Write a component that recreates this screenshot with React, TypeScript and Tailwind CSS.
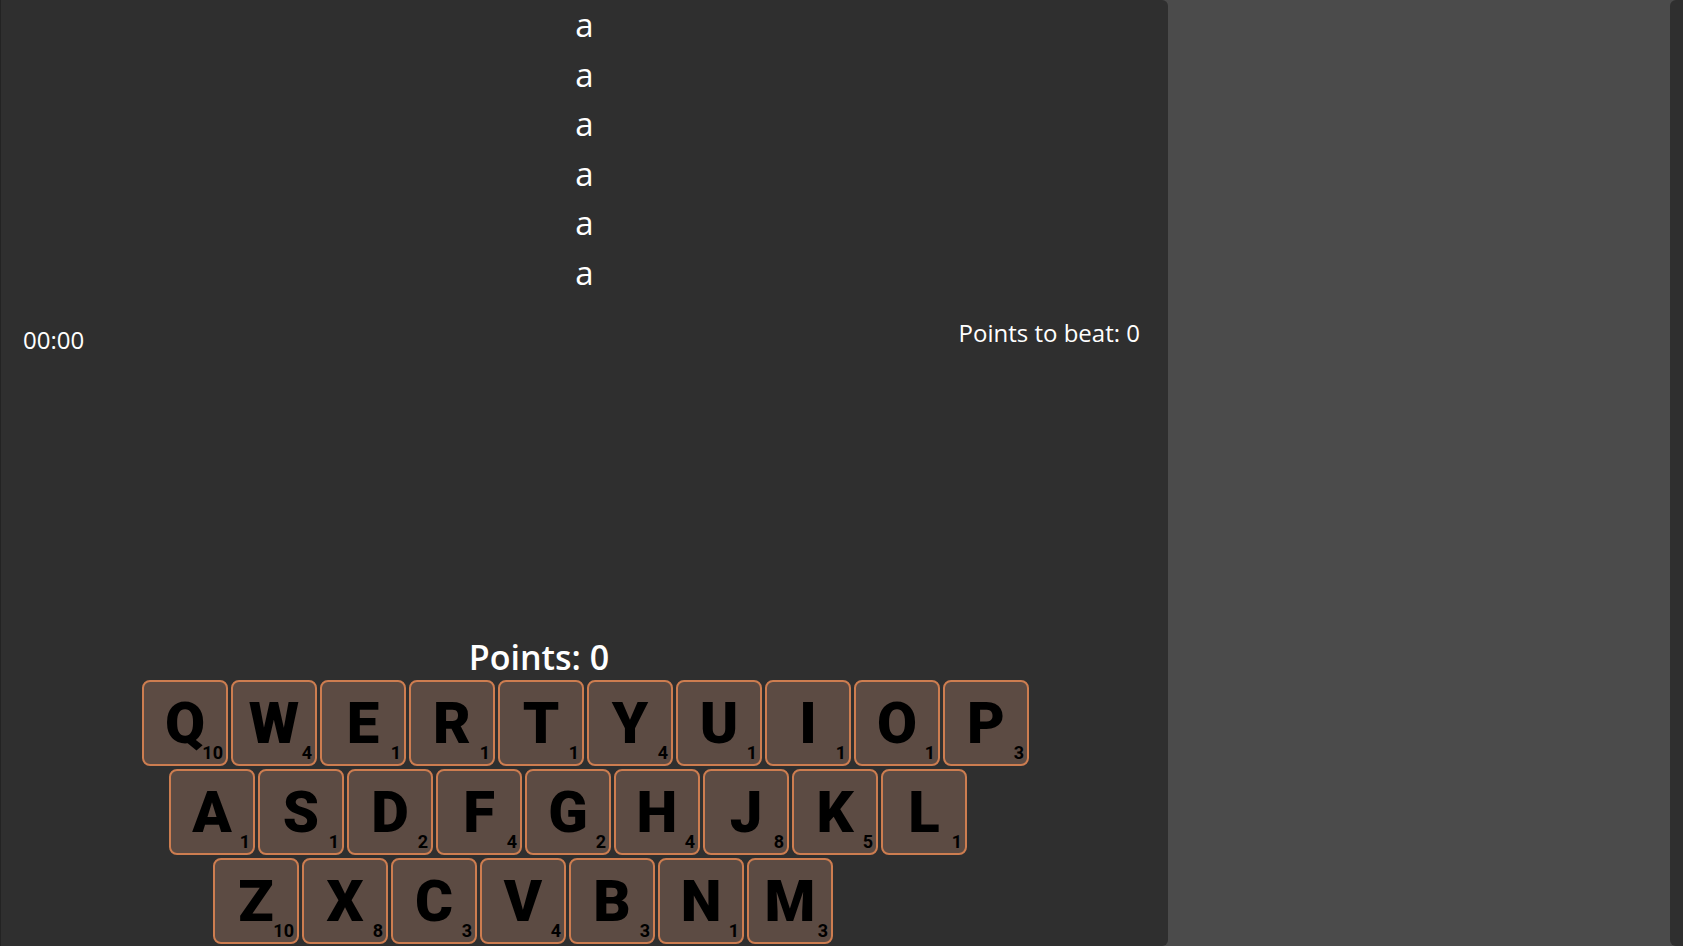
const rows: [string, number][][] = [
  [["Q", 10], ["W", 4], ["E", 1], ["R", 1], ["T", 1], ["Y", 4], ["U", 1], ["I", 1], ["O", 1], ["P", 3]],
  [["A", 1], ["S", 1], ["D", 2], ["F", 4], ["G", 2], ["H", 4], ["J", 8], ["K", 5], ["L", 1]],
  [["Z", 10], ["X", 8], ["C", 3], ["V", 4], ["B", 3], ["N", 1], ["M", 3]],
];

const rowOffsets = ["ml-[141px]", "ml-[168px]", "ml-[212px]"];

function Tile({ letter, value }: { letter: string; value: number }) {
  return (
    <div className="relative flex h-[86px] w-[86px] shrink-0 items-center justify-center rounded-[8px] border-2 border-[#cd7d50] bg-[#5c4b43]">
      <span className="text-[58px] font-black leading-none text-black" style={{ fontFamily: "Roboto, sans-serif" }}>
        {letter}
      </span>
      <span
        className="absolute bottom-[2px] right-[3px] text-[18px] font-bold leading-none text-black"
        style={{ fontFamily: "Roboto, sans-serif" }}
      >
        {value}
      </span>
    </div>
  );
}

export default function App() {
  return (
    <div
      className="flex h-[946px] w-full overflow-hidden bg-[#4b4b4b] text-white"
      style={{ fontFamily: "'Open Sans', sans-serif" }}
    >
      {/* game panel */}
      <div className="flex h-full w-[1168px] shrink-0 flex-col rounded-r-[6px] border-l border-[#232323] bg-[#2f2f2f]">
        <div className="flex flex-col items-center">
          {Array.from({ length: 6 }).map((_, i) => (
            <div key={i} className="text-[33px] leading-[49.5px]">
              a
            </div>
          ))}
        </div>

        <div className="mt-[19px] flex items-start justify-between pl-[22px] pr-[28px]">
          <div className="mt-[7px] text-[24px] leading-[33px]">00:00</div>
          <div className="text-[24px] leading-[33px]">Points to beat: 0</div>
        </div>

        <div className="mt-[279px] w-[1076px] text-center text-[34px] font-semibold leading-[45px]">Points: 0</div>

        <div className="flex flex-col gap-[3px]">
          {rows.map((row, r) => (
            <div key={r} className={`flex gap-[3px] ${rowOffsets[r]}`}>
              {row.map(([l, v]) => (
                <Tile key={l} letter={l} value={v} />
              ))}
            </div>
          ))}
        </div>
      </div>

      {/* side area */}
      <div className="h-full w-[502px] shrink-0" />
      <div className="h-full flex-1 rounded-l-[6px] bg-[#2f2f2f]" />
    </div>
  );
}
